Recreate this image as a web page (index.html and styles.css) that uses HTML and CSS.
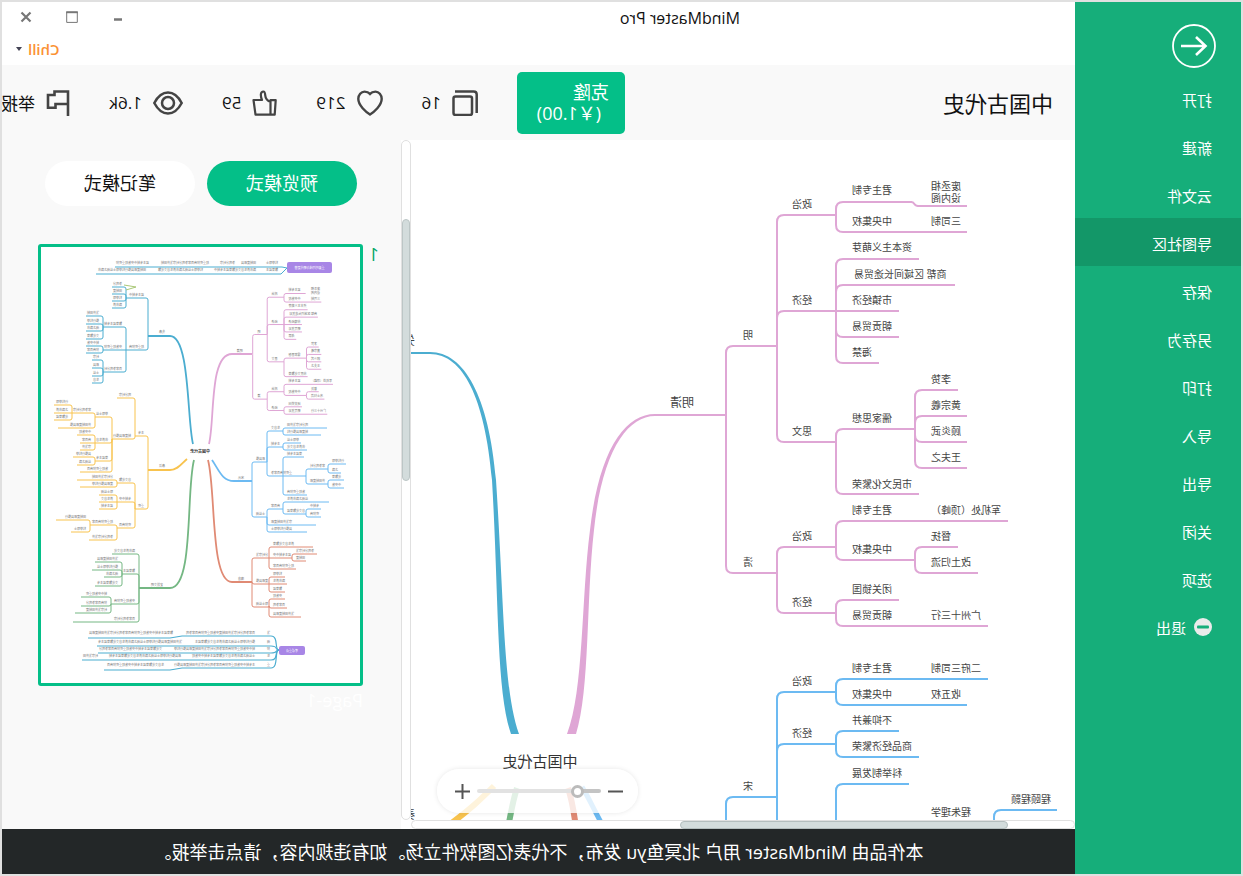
FILE: index.html
```html
<!DOCTYPE html>
<html lang="zh-CN">
<head>
<meta charset="utf-8">
<title>MindMaster Pro</title>
<link rel="stylesheet" href="styles.css">
</head>
<body>
<div class="app">
  <aside class="sidebar">
    <button class="back" aria-label="返回">
      <svg width="46" height="46" viewBox="0 0 46 46" fill="none" stroke="#fff"><circle cx="23" cy="23" r="21" stroke-width="1.8"/><path d="M36 23H11.500M21 14l-9.500 9 9.500 9" stroke-width="2.600"/></svg>
    </button>
    <nav class="menu">
      <button class="menu-item">打开</button>
      <button class="menu-item">新建</button>
      <button class="menu-item">云文件</button>
      <button class="menu-item active">导图社区</button>
      <button class="menu-item">保存</button>
      <button class="menu-item">另存为</button>
      <button class="menu-item">打印</button>
      <button class="menu-item">导入</button>
      <button class="menu-item">导出</button>
      <button class="menu-item">关闭</button>
      <button class="menu-item">选项</button>
      <button class="menu-item"><svg width="18" height="18" viewBox="0 0 18 18"><circle cx="9" cy="9" r="9" fill="#ebebeb"/><rect x="3" y="7.500" width="12" height="3" rx="1" fill="#16ae7a"/></svg>退出</button>
    </nav>
  </aside>

  <div class="main">
    <header class="titlebar">
      <div class="app-name">MindMaster Pro</div>
      <div class="corner">
        <div class="window-buttons">
          <button aria-label="最小化"><svg width="12" height="12" viewBox="0 0 12 12"><path d="M2 8.500h8" stroke="#777" stroke-width="2.500"/></svg></button>
          <button aria-label="最大化"><svg width="12" height="12" viewBox="0 0 12 12" fill="none" stroke="#777"><path d="M.7 1v10.400h10.600V1"/><path d="M.2 1.200h11.600" stroke-width="2"/></svg></button>
          <button aria-label="关闭窗口"><svg width="12" height="12" viewBox="0 0 12 12"><path d="M1.500 1.500l9 9M10.500 1.500l-9 9" stroke="#777" stroke-width="2.200"/></svg></button>
        </div>
        <button class="user">Chill<span class="caret"></span></button>
      </div>
    </header>

    <section class="workbar">
      <h1 class="work-title">中国古代史</h1>
      <div class="stats">
        <button class="clone"><span>克隆</span><span class="price">(￥1.00)</span></button>
        <span class="stat"><svg width="26" height="26" viewBox="0 0 26 26" fill="none" stroke="#444" stroke-width="2.500"><rect x="6" y="6.500" width="18.500" height="18.500" rx="2"/><path d="M1.300 23V4.500Q1.300 1.500 4.300 1.500H23"/></svg>16</span>
        <span class="stat"><svg width="26" height="26" viewBox="0 0 26 26" fill="none" stroke="#444" stroke-width="2.400"><path d="M13 24.500C9 22 1.300 15.500 1.300 8.800 1.300 4.800 4.200 1.600 7.500 1.600c2.300 0 4.300.9 5.500 2.300 1.200-1.400 3.200-2.300 5.500-2.300 3.300 0 6.200 3.200 6.200 7.200 0 6.700-7.700 13.200-11.700 15.700z"/></svg>219</span>
        <span class="stat"><svg width="25" height="26" viewBox="0 0 25 26" fill="none" stroke="#444" stroke-width="2.200" stroke-linejoin="round"><path d="M1.300 10.200h5.200v14.500H2.300zM6.500 12c3-1.200 5-3.600 5.200-6.300.2-2.700.5-4.200 1.900-4.200 3 0 3.200 4.300 1.400 8.500h8.500l-2 14.600h-15z"/></svg>59</span>
        <span class="stat"><svg width="30" height="26" viewBox="0 0 30 26" fill="none" stroke="#444" stroke-width="2.500"><path d="M1.300 13C5 6 9.500 2.500 15 2.500S25 6 28.700 13C25 20 20.500 23.500 15 23.500S5 20 1.300 13z"/><circle cx="15" cy="13" r="6"/></svg>1.6k</span>
        <button class="stat report"><svg width="24" height="26" viewBox="0 0 24 26" fill="none" stroke="#444" stroke-width="2.600"><path d="M2 26V1.500h13.500V5H22v12.800h-7.500V14H2"/></svg>举报</button>
      </div>
    </section>

    <div class="body">
      <div class="viewer">
        <div class="canvas">
          <svg id="map" class="map" width="664" height="680" viewBox="0 0 664 680"></svg>
          <div class="zoombar">
            <button aria-label="缩小"><svg width="15" height="15" viewBox="0 0 15 15"><path d="M0 7.500h15" stroke="#555" stroke-width="2"/></svg></button>
            <input type="range" min="0" max="100" value="15" aria-label="缩放">
            <button aria-label="放大"><svg width="15" height="15" viewBox="0 0 15 15"><path d="M0 7.500h15M7.500 0v15" stroke="#555" stroke-width="2"/></svg></button>
          </div>
        </div>
        <div class="scroll-y"><div class="grip-y"></div></div>
        <div class="scroll-x"><div class="grip-x"></div></div>
      </div>

      <aside class="panel">
        <div class="modes">
          <button class="mode on">预览模式</button>
          <button class="mode">笔记模式</button>
        </div>
        <div class="page">
          <span class="page-no">1</span>
          <div class="page-body">
            <button class="thumb" aria-label="Page-1"><svg id="preview" width="319" height="436" viewBox="0 0 319 436"></svg></button>
            <div class="page-name">Page-1</div>
          </div>
        </div>
      </aside>
    </div>

    <footer class="notice">本作品由 MindMaster 用户 北冥鱼yu 发布，不代表亿图软件立场。如有违规内容，请点击举报。</footer>
  </div>
</div>
<script src="map.js"></script>
</body>
</html>
```
FILE: styles.css
```css
* { box-sizing: border-box; }
body { margin: 0; }
button { border: 0; padding: 0; background: none; font: inherit; color: inherit; text-align: left; }
svg { display: block; flex: none; }

.app {
  display: flex;
  height: 100vh;
  border: 2px solid #e0e0e0;
  overflow: hidden;
  background: #fff;
  color: #111;
  font-family: "Open Sans", "Noto Sans CJK SC", sans-serif;
  transform: scaleX(-1);
}

.sidebar { flex: none; width: 166px; background: #16ae7a; color: #fff; }
.back { display: block; margin: 21px 0 5px 24px; }
.menu { display: flex; flex-direction: column; }
.menu-item {
  display: flex;
  align-items: center;
  gap: 8px;
  height: 48px;
  padding: 2px 0 0 29px;
  font-size: 15px;
}
.menu-item.active { background: #139768; }

.main { flex: 1; min-width: 0; display: flex; flex-direction: column; }

.titlebar { flex: none; display: flex; justify-content: space-between; height: 63px; padding-left: 335px; }
.app-name { padding-top: 5px; font-size: 16px; line-height: 22px; }
.corner { display: flex; flex-direction: column; align-items: flex-end; gap: 16px; padding: 9px 14px 0 0; }
.window-buttons { display: flex; gap: 34px; padding-right: 4px; }
.user { display: flex; align-items: center; gap: 6px; color: #fb9234; font-size: 15px; font-weight: 600; line-height: 20px; }
.caret { border: 3px solid transparent; border-top: 4px solid #445; border-bottom: 0; }

.workbar { flex: none; display: flex; align-items: center; height: 75px; padding-left: 22px; background: #f9f9f9; overflow: hidden; }
.work-title { flex: none; width: 428px; margin: 0; font-size: 22px; font-weight: 400; line-height: 30px; }
.stats { flex: none; display: flex; align-items: center; gap: 39px; font-size: 17px; }
.clone {
  display: flex;
  flex-direction: column;
  justify-content: center;
  width: 108px;
  height: 62px;
  padding-left: 16px;
  border-radius: 5px;
  background: #04bf88;
  color: #fff;
  font-size: 18px;
  line-height: 21px;
}
.price { padding-left: 8px; }
.stat { display: flex; align-items: center; gap: 11px; white-space: nowrap; }

.body { flex: 1; min-height: 0; display: flex; }
.viewer { flex: 1; min-width: 0; display: grid; grid-template: minmax(0, 1fr) 9px / minmax(0, 1fr) 10px; }
.canvas { position: relative; display: flex; justify-content: flex-end; overflow: hidden; background: #fff; }
.scroll-y, .scroll-x { border: 1px solid #e0e0e0; border-radius: 5px; background: #fff; }
.scroll-y { padding-top: 78px; }
.scroll-x { padding-left: 66px; }
.grip-y { height: 262px; border: 1px solid #bcc6c6; border-radius: 5px; background: #d3dcdc; }
.grip-x { width: 328px; height: 8px; border: 1px solid #b4bebe; border-radius: 5px; background: #d3dcdc; }

.zoombar {
  position: absolute;
  right: 26px;
  bottom: 7px;
  display: flex;
  align-items: center;
  gap: 7px;
  height: 44px;
  padding: 0 18px 0 15px;
  border-radius: 22px;
  background: rgba(255, 255, 255, .8);
  box-shadow: 0 0 5px rgba(0, 0, 0, .1);
}
.zoombar input {
  appearance: none;
  width: 124px;
  height: 4px;
  margin: 0;
  border-radius: 2px;
  background: linear-gradient(to right, #c4c4c4 18%, #e2e2e2 18%);
}
.zoombar input::-webkit-slider-thumb {
  appearance: none;
  width: 13px;
  height: 13px;
  border: 3px solid #bbb;
  border-radius: 50%;
  background: #fff;
}

.panel { flex: none; width: 399px; padding: 21px 0 0 22px; background: #f9f9f9; }
.modes { display: flex; gap: 12px; padding-left: 22px; }
.mode { width: 150px; height: 45px; padding-bottom: 3px; border-radius: 23px; background: #fff; font-size: 18px; text-align: center; }
.mode.on { background: #04bf88; color: #fff; }
.page { display: flex; margin-top: 38px; font-size: 18px; line-height: 20px; }
.page-no { width: 16px; color: #04a868; }
.thumb { display: block; border: 3px solid #04bf88; border-radius: 3px; background: #fff; }
.page-name { padding-top: 4px; color: #fff; }

.notice { flex: none; height: 45px; background: #232728; color: #fff; font-size: 18px; line-height: 46px; text-align: center; white-space: nowrap; }
```
FILE: map.js
```js
const PINK = '#dfa6d5', SKY = '#6cbaf2', SEA = '#4badd0', GOLD = '#f8c34e', LEAF = '#74b783', CORAL = '#e08a74';

/* Connectors: colour, trunk, parent height, child height, end of underline. */
const links = [
  [PINK, 726, 415, 346, 777], [PINK, 726, 415, 573, 777],
  [PINK, 777, 346, 215, 836], [PINK, 777, 346, 311, 836], [PINK, 777, 346, 442, 836],
  [PINK, 836, 215, 202, 912], [PINK, 836, 215, 232, 967],
  [PINK, 836, 311, 259, 919], [PINK, 836, 311, 285, 955], [PINK, 836, 311, 311, 899],
  [PINK, 836, 311, 337, 899], [PINK, 836, 311, 363, 879],
  [PINK, 836, 442, 429, 915], [PINK, 836, 442, 494, 919],
  [PINK, 915, 429, 390, 958], [PINK, 915, 429, 416, 967], [PINK, 915, 429, 442, 967], [PINK, 915, 429, 468, 967],
  [PINK, 777, 573, 547, 836], [PINK, 777, 573, 613, 836],
  [PINK, 836, 547, 521, 1008], [PINK, 836, 547, 560, 915],
  [PINK, 915, 560, 547, 958], [PINK, 915, 560, 573, 978],
  [PINK, 836, 613, 600, 899], [PINK, 836, 613, 626, 988],
  [SKY, 726, 850, 797, 777], [SKY, 777, 850, 692, 836], [SKY, 777, 850, 744, 836],
  [SKY, 836, 692, 679, 988], [SKY, 836, 692, 705, 967],
  [SKY, 836, 744, 731, 899], [SKY, 836, 744, 757, 919],
  [SKY, 836, 850, 784, 909], [SKY, 994, 850, 810, 1057]
];

const labels = [
  ['明清', 670, 402, 12], ['明', 743, 335], ['清', 743, 562], ['政治', 792, 204], ['经济', 792, 300], ['思文', 792, 431],
  ['君主专制', 852, 190], ['废丞相', 931, 186], ['设内阁', 931, 198], ['中央集权', 852, 221], ['三司制', 931, 221],
  ['资本主义萌芽', 852, 247], ['商帮 区域间长途贸易', 854, 274], ['市镇经济', 852, 300], ['朝贡贸易', 852, 326], ['海禁', 852, 352],
  ['李贽', 931, 379], ['黄宗羲', 931, 405], ['顾炎武', 931, 431], ['王夫之', 931, 457], ['儒家思想', 852, 418], ['市民文化繁荣', 852, 484],
  ['君主专制', 852, 510], ['军机处（顶峰）', 931, 510], ['政治', 792, 536], ['督抚', 931, 536], ['中央集权', 852, 549], ['改土归流', 931, 562],
  ['闭关锁国', 852, 589], ['经济', 792, 602], ['朝贡贸易', 852, 615], ['广州十三行', 931, 615],
  ['君主专制', 852, 668], ['二府三司制', 931, 668], ['政治', 792, 681], ['中央集权', 852, 694], ['收五权', 931, 694],
  ['不抑兼并', 852, 720], ['经济', 792, 733], ['商品经济繁荣', 852, 746], ['科举制发展', 852, 773], ['宋', 743, 786],
  ['程朱理学', 931, 812], ['程颐程颢', 1011, 799]
];

const draw = (left, top) => {
  const X = x => left - x, Y = y => y - top;
  return {
    /* rounded elbow from the trunk to the child's underline */
    link([c, t, p, y, e], w, r) {
      const s = Math.sign(y - p), k = Math.sign(e - t);
      const elbow = s ? `M${X(t)} ${Y(p)}V${Y(y) - s * r}Q${X(t)} ${Y(y)} ${X(t + k * r)} ${Y(y)}` : `M${X(t)} ${Y(y)}`;
      return `<path d="${elbow}H${X(e)}" fill="none" stroke="${c}" stroke-width="${w}"/>`;
    },
    text(s, x, y, size, anchor = 'end', fill = '#444') {
      return `<text x="${X(x)}" y="${Y(y) + size * .38}" font-size="${size}" text-anchor="${anchor}" fill="${fill}">${s}</text>`;
    },
    /* absolute M/C/L paths given as point lists */
    shape(cmds, attrs) {
      const d = cmds.map(([op, ...n]) => op + n.map((v, i) => i % 2 ? Y(v) : X(v)).join(' ')).join('');
      return `<path d="${d}" ${attrs}/>`;
    },
    box(x0, y0, x1, y1) {
      return `<rect x="${X(x1)}" y="${Y(y0)}" width="${x1 - x0}" height="${y1 - y0}" rx="2" fill="#a886e6"/>`;
    }
  };
};

const m = draw(1075, 140);
document.getElementById('map').innerHTML =
  m.shape([['M', 567, 734], ['C', 584, 690, 581, 600, 590, 530], ['C', 599, 450, 625, 414, 655, 414], ['L', 726, 414], ['L', 726, 416], ['L', 655, 416], ['C', 627, 416, 602, 452, 594, 530], ['C', 586, 600, 590, 690, 576, 734]], `fill="${PINK}"`) +
  m.shape([['M', 519, 734], ['C', 503, 690, 504, 600, 496, 480], ['C', 489, 396, 464, 352, 430, 352], ['L', 405, 352], ['L', 405, 354], ['L', 430, 354], ['C', 463, 354, 485, 398, 492, 480], ['C', 499, 600, 496, 690, 511, 734]], `fill="${SEA}"`) +
  m.shape([['M', 494, 786], ['C', 480, 800, 472, 808, 445, 828]], `fill="none" stroke="${GOLD}" stroke-width="6"`) +
  m.shape([['M', 517, 788], ['C', 513, 800, 511, 812, 508, 828]], `fill="none" stroke="${LEAF}" stroke-width="6"`) +
  m.shape([['M', 568, 788], ['C', 572, 800, 574, 812, 576, 828]], `fill="none" stroke="${CORAL}" stroke-width="6"`) +
  m.shape([['M', 582, 787], ['C', 588, 796, 594, 810, 603, 826]], `fill="none" stroke="${SKY}" stroke-width="5"`) +
  m.shape([['M', 911, 202], ['C', 916, 202, 912, 206, 920, 206], ['L', 967, 206]], `fill="none" stroke="${PINK}" stroke-width="2"`) +
  links.map(l => m.link(l, 2, 7)).join('') +
  labels.map(([s, x, y, size = 10]) => m.text(s, x, y, size)).join('') +
  m.text('中国古代史', 540, 761, 15, 'middle', '#333') +
  m.text('先秦', 415, 340, 12, 'start') + m.text('秦汉', 415, 814, 12, 'start');

/* Overview of the whole map. */
const small = [
  [SEA, 148, 336, 298, 126], [SEA, 148, 336, 350, 126],
  [SEA, 126, 298, 287, 112], [SEA, 126, 298, 294, 112], [SEA, 126, 298, 301, 112], [SEA, 126, 298, 308, 112],
  [SEA, 126, 350, 327, 103], [SEA, 126, 350, 350, 103], [SEA, 126, 350, 372, 103],
  [SEA, 103, 327, 316, 86], [SEA, 103, 327, 324, 86], [SEA, 103, 327, 331, 86], [SEA, 103, 327, 339, 86],
  [SEA, 103, 350, 346, 86], [SEA, 103, 350, 353, 86],
  [SEA, 103, 372, 360, 92], [SEA, 103, 372, 368, 92], [SEA, 103, 372, 376, 92], [SEA, 103, 372, 383, 92],
  [GOLD, 148, 470, 436, 135], [GOLD, 148, 470, 509, 135], [GOLD, 135, 436, 398, 117], [GOLD, 135, 436, 439, 112],
  [GOLD, 112, 439, 417, 95], [GOLD, 112, 439, 443, 95], [GOLD, 112, 439, 461, 95], [GOLD, 112, 439, 472, 80],
  [GOLD, 95, 417, 413, 72], [GOLD, 95, 417, 428, 58], [GOLD, 72, 413, 405, 54], [GOLD, 72, 413, 413, 54], [GOLD, 72, 413, 420, 54],
  [GOLD, 95, 443, 435, 77], [GOLD, 95, 443, 443, 80], [GOLD, 95, 443, 450, 80], [GOLD, 95, 461, 457, 73], [GOLD, 95, 461, 465, 77],
  [GOLD, 135, 509, 483, 117], [GOLD, 135, 509, 502, 117], [GOLD, 135, 509, 528, 117],
  [GOLD, 117, 483, 480, 77], [GOLD, 117, 483, 487, 80], [GOLD, 117, 502, 495, 99], [GOLD, 117, 502, 502, 99], [GOLD, 117, 502, 509, 99],
  [GOLD, 117, 528, 525, 90], [GOLD, 117, 528, 540, 89], [GOLD, 90, 525, 520, 56], [GOLD, 90, 525, 532, 71],
  [LEAF, 139, 588, 554, 112], [LEAF, 139, 588, 574, 122], [LEAF, 139, 588, 604, 111], [LEAF, 139, 588, 622, 73],
  [LEAF, 122, 574, 562, 95], [LEAF, 122, 574, 570, 92], [LEAF, 122, 574, 577, 104], [LEAF, 122, 574, 586, 95],
  [LEAF, 111, 604, 597, 81], [LEAF, 111, 604, 606, 81], [LEAF, 111, 604, 613, 75],
  [SKY, 252, 481, 462, 267], [SKY, 252, 481, 517, 267], [SKY, 267, 462, 431, 283], [SKY, 267, 462, 447, 283], [SKY, 267, 462, 476, 306],
  [SKY, 283, 431, 428, 327], [SKY, 283, 431, 435, 321], [SKY, 283, 447, 443, 301], [SKY, 283, 447, 450, 307],
  [SKY, 283, 476, 457, 304], [SKY, 283, 476, 495, 307], [SKY, 306, 476, 469, 328], [SKY, 306, 476, 484, 328],
  [SKY, 328, 469, 464, 346], [SKY, 328, 469, 473, 341], [SKY, 328, 484, 480, 344], [SKY, 328, 484, 488, 344],
  [SKY, 267, 517, 509, 283], [SKY, 267, 517, 525, 316], [SKY, 267, 517, 532, 307], [SKY, 283, 509, 502, 329], [SKY, 283, 509, 514, 306],
  [SKY, 306, 514, 509, 321], [SKY, 306, 514, 517, 321],
  [CORAL, 252, 582, 558, 269], [CORAL, 252, 582, 584, 269], [CORAL, 252, 582, 607, 269],
  [CORAL, 269, 558, 547, 313], [CORAL, 269, 558, 558, 292], [CORAL, 269, 558, 569, 296], [CORAL, 292, 558, 554, 317], [CORAL, 292, 558, 561, 306],
  [CORAL, 269, 584, 577, 285], [CORAL, 269, 584, 584, 287], [CORAL, 269, 584, 592, 285],
  [CORAL, 269, 607, 599, 285], [CORAL, 269, 607, 608, 287], [CORAL, 269, 607, 617, 301]
];
const terms = '君主专制中央集权重农抑商百家争鸣分封宗法井田制度郡县推行科举取士丝绸之路休养生息文化繁荣';
const phrase = (n, seed) => Array.from({ length: n }, (_, i) => terms[(seed * 7 + i) % terms.length]).join('');
const t = draw(360, 247);
const k = .2847;
const GREY = '#777';
const rows = [
  [263, [[117, 149], [161, 209], [221, 235], [241, 256], [266, 278]]],
  [270, [[98, 146], [157, 203], [215, 256], [266, 278]]],
  [633, [[90, 173], [186, 219], [220, 255], [267, 270]]],
  [642, [[98, 182], [194, 255], [267, 270]]],
  [649, [[100, 162], [174, 255], [267, 270]]],
  [656, [[84, 98], [108, 181], [192, 255], [267, 270]]],
  [665, [[106, 164], [174, 255], [267, 270]]]
];
const curve = (c, cmds) => t.shape(cmds, `fill="none" stroke="${c}" stroke-width="1.800"`);
document.getElementById('preview').innerHTML =
  curve(SEA, [['M', 193, 444], ['C', 187, 420, 190, 336, 170, 336], ['L', 148, 336]]) +
  curve(PINK, [['M', 209, 444], ['C', 215, 420, 209, 354, 232, 354], ['L', 252, 354]]) +
  curve(GOLD, [['M', 187, 459], ['C', 182, 463, 178, 470, 170, 470], ['L', 148, 470]]) +
  curve(LEAF, [['M', 194, 460], ['C', 186, 490, 194, 588, 170, 588], ['L', 139, 588]]) +
  curve(SKY, [['M', 212, 460], ['C', 219, 470, 222, 481, 234, 481], ['L', 252, 481]]) +
  curve(CORAL, [['M', 208, 460], ['C', 216, 490, 210, 582, 232, 582], ['L', 252, 582]]) +
  links.filter(l => l[0] === PINK).map(([c, a, b, d, e]) => t.link([c, 46 + a * k, 236 + b * k, 236 + d * k, 46 + e * k], 1, 2)).join('') +
  labels.filter(l => l[2] < 640).map(([s, x, y]) => t.text(s, 46 + x * k, 236 + y * k, 3, 'end', GREY)).join('') +
  small.map((l, i) => {
    const [, a, , y, e] = l, side = Math.sign(e - a);
    const n = Math.max(2, Math.min(7, Math.floor((Math.abs(e - a) - 5) / 3)));
    return t.link(l, 1, 2) + t.text(phrase(n, i), a + side * 4, y - 3, 3, side > 0 ? 'end' : 'start', GREY);
  }).join('') +
  rows.map(([y, spans], r) => spans.map(([a, b], i) => t.text(phrase(Math.round((b - a) / 3), r * 3 + i), b, y, 3, 'start', GREY)).join('')).join('') +
  t.box(287, 262, 332, 273) + t.text('重要时间线与朝代更替', 309.5, 267.5, 3, 'middle', '#fff') +
  t.box(279, 646, 305, 655) + t.text('考试重点', 292, 650.5, 3, 'middle', '#fff') +
  [[[287, 268], [282, 267], 115, 267], [[287, 268], [281, 274], 96, 274]].map(([p, q, x, y]) => t.shape([['M', ...p], ['L', ...q], ['L', x, y]], `fill="none" stroke="${SEA}"`)).join('') +
  [[636, 88, 638], [646, 97, 646], [653, 98, 653], [660, 82, 660], [668, 104, 670]].map(([y, x, y2]) =>
    t.shape([['M', 279, 650], ['C', 274, 650, 279, y, 271, y], ['L', 182, y], ['L', 170, y2], ['L', x, y2]], `fill="none" stroke="${SEA}" stroke-width="1.200"`)).join('') +
  t.shape([['M', 124, 285], ['L', 136, 287], ['L', 126, 290]], 'fill="none" stroke="#a9c878"') +
  [['先秦', 162, 332], ['秦汉', 162, 466], ['史前文明', 157, 585], ['宋元', 241, 478], ['隋唐', 241, 579]].map(([s, x, y]) => t.text(s, x, y, 3, 'middle', GREY)).join('') +
  `<g font-weight="bold">${t.text('中国古代史', 200, 451, 4, 'middle', '#333')}</g>`;
```
